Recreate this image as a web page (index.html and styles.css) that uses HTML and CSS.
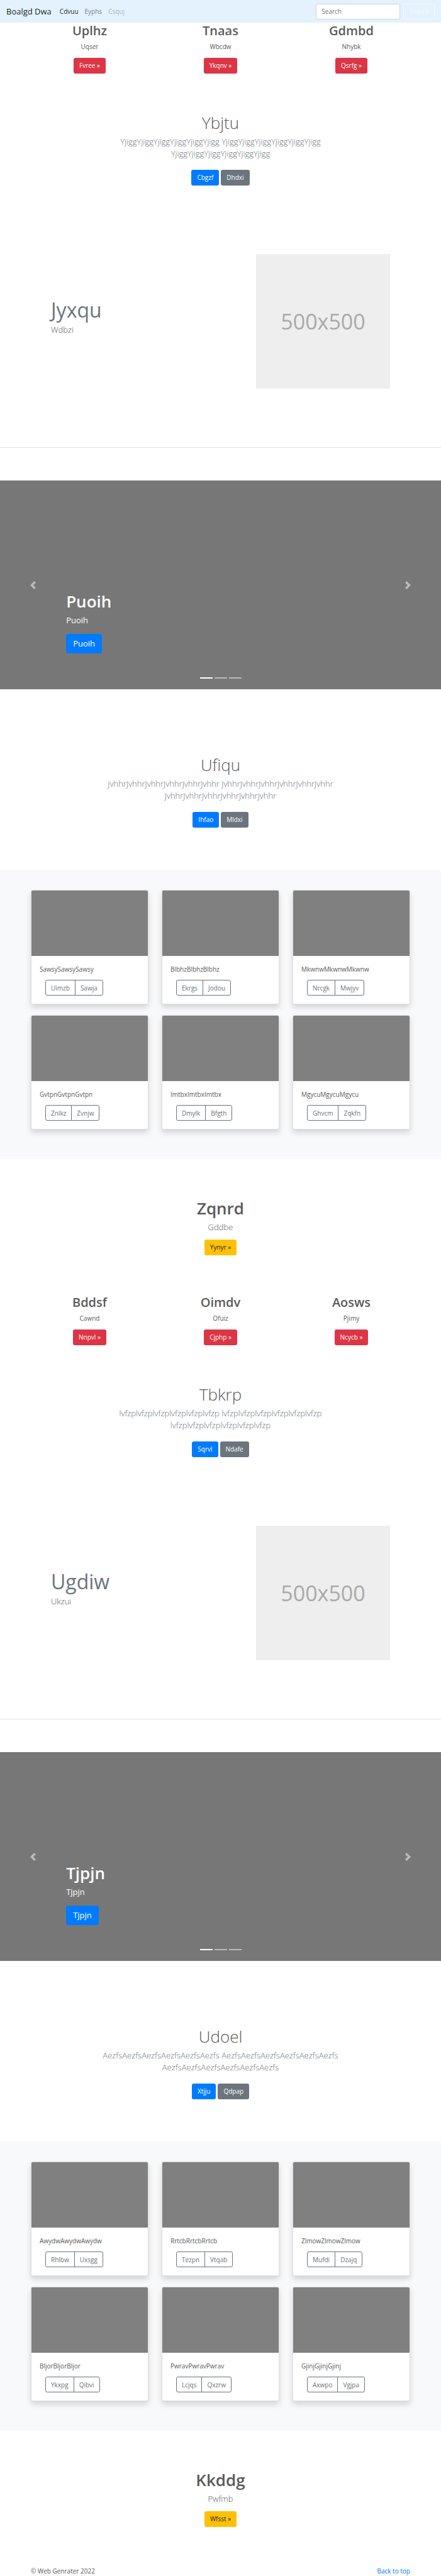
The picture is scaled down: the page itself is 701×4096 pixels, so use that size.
FILE: index.html
```html
<!DOCTYPE html>
<html lang="en">
<head>
<meta charset="utf-8">
<meta name="viewport" content="width=device-width, initial-scale=1">
<title>Boalgd Dwa</title>
<link rel="stylesheet" href="styles.css">
</head>
<body>
<header class="navbar" id="top">
  <a class="brand" href="#">Boalgd Dwa</a>
  <nav class="nav-links">
    <a class="nav-link active" href="#">Cdvuu</a>
    <a class="nav-link" href="#">Eyphs</a>
    <a class="nav-link disabled" href="#">Csquj</a>
  </nav>
  <form class="search">
    <input class="search-input" type="search" placeholder="Search" aria-label="Search">
    <button class="btn btn-ghost" type="button">Search</button>
  </form>
</header>

<main>
  <section class="features">
    <div class="feature"><h2>Uplhz</h2><p>Uqser</p><a class="btn btn-danger" href="#">Fvree »</a></div>
    <div class="feature"><h2>Tnaas</h2><p>Wbcdw</p><a class="btn btn-danger" href="#">Ykqnv »</a></div>
    <div class="feature"><h2>Gdmbd</h2><p>Nhybk</p><a class="btn btn-danger" href="#">Qsrfg »</a></div>
  </section>

  <section class="intro">
    <h1 class="display">Ybjtu</h1>
    <p class="lead muted">YjiggYjiggYjiggYjiggYjiggYjigg YjiggYjiggYjiggYjiggYjiggYjigg YjiggYjiggYjiggYjiggYjiggYjigg</p>
    <div class="actions"><a class="btn btn-primary" href="#">Cbgzf</a><a class="btn btn-secondary" href="#">Dhdxi</a></div>
  </section>

  <section class="featurette">
    <div class="featurette-text"><h2>Jyxqu</h2><p class="lead">Wdbzi</p></div>
    <div class="placeholder">500x500</div>
  </section>
  <hr class="divider">

  <section class="carousel">
    <button class="control" type="button" aria-label="Previous"><svg viewBox="0 0 8 8"><path d="M5.25 0l-4 4 4 4 1.5-1.5L4.25 4l2.5-2.5L5.25 0z"/></svg></button>
    <div class="caption"><h1>Puoih</h1><p>Puoih</p><a class="btn btn-primary btn-lg" href="#">Puoih</a></div>
    <button class="control" type="button" aria-label="Next"><svg viewBox="0 0 8 8"><path d="M2.75 0l-1.5 1.5L3.75 4l-2.5 2.5L2.75 8l4-4-4-4z"/></svg></button>
    <div class="indicators"><span class="current"></span><span></span><span></span></div>
  </section>

  <section class="intro intro-album">
    <h1 class="display">Ufiqu</h1>
    <p class="lead muted">JvhhrJvhhrJvhhrJvhhrJvhhrJvhhr JvhhrJvhhrJvhhrJvhhrJvhhrJvhhr JvhhrJvhhrJvhhrJvhhrJvhhrJvhhr</p>
    <div class="actions"><a class="btn btn-primary" href="#">Ihfao</a><a class="btn btn-secondary" href="#">Mldxi</a></div>
  </section>

  <section class="album">
    <article class="card"><div class="thumb"></div><div class="card-body"><p>SawsySawsySawsy</p><div class="btn-group"><button type="button">Uimzb</button><button type="button">Sawja</button></div></div></article>
    <article class="card"><div class="thumb"></div><div class="card-body"><p>BlbhzBlbhzBlbhz</p><div class="btn-group"><button type="button">Ekrgs</button><button type="button">Jodou</button></div></div></article>
    <article class="card"><div class="thumb"></div><div class="card-body"><p>MkwnwMkwnwMkwnw</p><div class="btn-group"><button type="button">Nrcgk</button><button type="button">Mwjyv</button></div></div></article>
    <article class="card"><div class="thumb"></div><div class="card-body"><p>GvtpnGvtpnGvtpn</p><div class="btn-group"><button type="button">Znlkz</button><button type="button">Zvnjw</button></div></div></article>
    <article class="card"><div class="thumb"></div><div class="card-body"><p>ImtbxImtbxImtbx</p><div class="btn-group"><button type="button">Dmylk</button><button type="button">Bfgth</button></div></div></article>
    <article class="card"><div class="thumb"></div><div class="card-body"><p>MgycuMgycuMgycu</p><div class="btn-group"><button type="button">Ghvcm</button><button type="button">Zqkfn</button></div></div></article>
  </section>

  <section class="cta">
    <h1>Zqnrd</h1>
    <p class="lead">Gddbe</p>
    <a class="btn btn-warning" href="#">Yynyr »</a>
  </section>

  <section class="features">
    <div class="feature"><h2>Bddsf</h2><p>Cawnd</p><a class="btn btn-danger" href="#">Nnpvl »</a></div>
    <div class="feature"><h2>Oimdv</h2><p>Ofuiz</p><a class="btn btn-danger" href="#">Cjphp »</a></div>
    <div class="feature"><h2>Aosws</h2><p>Pjimy</p><a class="btn btn-danger" href="#">Ncycb »</a></div>
  </section>

  <section class="intro">
    <h1 class="display">Tbkrp</h1>
    <p class="lead muted">lvfzplvfzplvfzplvfzplvfzplvfzp lvfzplvfzplvfzplvfzplvfzplvfzp lvfzplvfzplvfzplvfzplvfzplvfzp</p>
    <div class="actions"><a class="btn btn-primary" href="#">Sqrvl</a><a class="btn btn-secondary" href="#">Ndafe</a></div>
  </section>

  <section class="featurette">
    <div class="featurette-text"><h2>Ugdiw</h2><p class="lead">Ukzui</p></div>
    <div class="placeholder">500x500</div>
  </section>
  <hr class="divider">

  <section class="carousel">
    <button class="control" type="button" aria-label="Previous"><svg viewBox="0 0 8 8"><path d="M5.25 0l-4 4 4 4 1.5-1.5L4.25 4l2.5-2.5L5.25 0z"/></svg></button>
    <div class="caption"><h1>Tjpjn</h1><p>Tjpjn</p><a class="btn btn-primary btn-lg" href="#">Tjpjn</a></div>
    <button class="control" type="button" aria-label="Next"><svg viewBox="0 0 8 8"><path d="M2.75 0l-1.5 1.5L3.75 4l-2.5 2.5L2.75 8l4-4-4-4z"/></svg></button>
    <div class="indicators"><span class="current"></span><span></span><span></span></div>
  </section>

  <section class="intro intro-album">
    <h1 class="display">Udoel</h1>
    <p class="lead muted">AezfsAezfsAezfsAezfsAezfsAezfs AezfsAezfsAezfsAezfsAezfsAezfs AezfsAezfsAezfsAezfsAezfsAezfs</p>
    <div class="actions"><a class="btn btn-primary" href="#">Xtjju</a><a class="btn btn-secondary" href="#">Qdpap</a></div>
  </section>

  <section class="album">
    <article class="card"><div class="thumb"></div><div class="card-body"><p>AwydwAwydwAwydw</p><div class="btn-group"><button type="button">Rhlbw</button><button type="button">Uxsgg</button></div></div></article>
    <article class="card"><div class="thumb"></div><div class="card-body"><p>RrtcbRrtcbRrtcb</p><div class="btn-group"><button type="button">Tezpn</button><button type="button">Vtqab</button></div></div></article>
    <article class="card"><div class="thumb"></div><div class="card-body"><p>ZlmowZlmowZlmow</p><div class="btn-group"><button type="button">Mufdi</button><button type="button">Dzajq</button></div></div></article>
    <article class="card"><div class="thumb"></div><div class="card-body"><p>BljorBljorBljor</p><div class="btn-group"><button type="button">Ykxpg</button><button type="button">Qibvi</button></div></div></article>
    <article class="card"><div class="thumb"></div><div class="card-body"><p>PwravPwravPwrav</p><div class="btn-group"><button type="button">Lcjqs</button><button type="button">Qxzrw</button></div></div></article>
    <article class="card"><div class="thumb"></div><div class="card-body"><p>GjinjGjinjGjinj</p><div class="btn-group"><button type="button">Axwpo</button><button type="button">Vgjpa</button></div></div></article>
  </section>

  <section class="cta">
    <h1>Kkddg</h1>
    <p class="lead">Pwfmb</p>
    <a class="btn btn-warning" href="#">Wfsst »</a>
  </section>
</main>

<footer class="footer">
  <p>© Web Genrater 2022</p>
  <a href="#top">Back to top</a>
</footer>
</body>
</html>
```

FILE: styles.css
```css
*, *::before, *::after { box-sizing: border-box; }

body {
  margin: 0;
  background: #fff;
  color: #5a5a5a;
  font-family: "Open Sans", "Noto Sans", sans-serif;
  font-size: 10px;
  line-height: 16px;
}

h1, h2, p { margin: 0; }
a { text-decoration: none; }

/* Buttons */
.btn {
  display: inline-block;
  height: 25px;
  padding: 3px 8px;
  border: 1px solid transparent;
  border-radius: 3px;
  color: #fff;
  font: inherit;
  line-height: 17px;
  white-space: nowrap;
}
.btn-primary { background: #007bff; }
.btn-secondary { background: #6c757d; }
.btn-danger { background: #dc3545; }
.btn-warning { background: #ffc107; color: #212529; }
.btn-ghost { background: transparent; border-color: #f8f9fa; color: #f8f9fa; }
.btn-lg { height: 31px; padding: 5px 10px; font-size: 13px; line-height: 19px; }

/* Navigation bar */
.navbar {
  display: flex;
  align-items: center;
  height: 36px;
  padding: 0 10px;
  background: #e3f2fd;
}
.brand { margin-right: 13px; color: rgba(0, 0, 0, .9); font-size: 13px; line-height: 20px; }
.nav-links { display: flex; gap: 10px; }
.nav-link { color: rgba(0, 0, 0, .5); }
.nav-link.active { color: rgba(0, 0, 0, .9); }
.nav-link.disabled { color: rgba(0, 0, 0, .3); }
.search { display: flex; gap: 5px; margin-left: auto; }
.search-input {
  width: 134px;
  height: 25px;
  padding: 3px 8px;
  border: 1px solid #ced4da;
  border-radius: 3px;
  background: #fff;
  color: #495057;
  font: inherit;
  appearance: none;
}
.search-input::placeholder { color: #6c757d; opacity: 1; }

/* Shared text */
.lead { font-size: 13px; font-weight: 300; line-height: 19px; }
.muted { color: #6c757d; }

/* Three-column features */
.features {
  display: grid;
  grid-template-columns: repeat(3, 1fr);
  gap: 21px;
  padding: 1px 49px 0;
  text-align: center;
}
.feature h2 { margin-bottom: 5px; font-size: 20px; font-weight: 600; line-height: 24px; }
.feature p { margin-bottom: 10px; }
.feature .btn { vertical-align: top; }

/* Centered introduction */
.intro { max-width: 400px; margin: 0 auto; padding-top: 62px; text-align: center; }
.intro-album { padding: 104px 0 67px; }
.display { margin-bottom: 5px; font-size: 26px; font-weight: 300; line-height: 32px; }
.intro .lead { margin-bottom: 16px; }
.actions { display: flex; justify-content: center; gap: 3px; }

/* Text beside a picture */
.featurette {
  display: flex;
  justify-content: space-between;
  align-items: flex-start;
  padding: 109px 81px 93px;
}
.featurette-text { padding-top: 70px; }
.featurette h2 { margin-bottom: 3px; color: #6c757d; font-size: 32px; font-weight: 400; line-height: 38px; }
.placeholder {
  display: flex;
  align-items: center;
  justify-content: center;
  width: 213px;
  height: 214px;
  background: #eee;
  color: #aaa;
  font-size: 34px;
}
.divider { margin: 0 0 52px; border: 0; border-top: 1px solid #e5e5e5; }

/* Carousel */
.carousel {
  position: relative;
  display: grid;
  grid-template-columns: 15% 1fr 15%;
  height: 332px;
  background: #777;
}
.control {
  display: flex;
  align-items: center;
  justify-content: center;
  padding: 0;
  border: 0;
  background: none;
  opacity: .5;
}
.control svg { width: 13px; height: 13px; fill: #fff; }
.caption { align-self: end; padding-bottom: 57px; color: #fff; }
.caption h1 { margin-bottom: 5px; font-size: 26px; font-weight: 600; line-height: 32px; }
.caption p { margin-bottom: 12px; font-size: 13px; line-height: 19px; }
.caption .btn { vertical-align: top; }
.indicators {
  position: absolute;
  right: 0;
  bottom: 17px;
  left: 0;
  display: flex;
  justify-content: center;
  gap: 3px;
}
.indicators span { width: 20px; height: 2px; background: #fff; opacity: .5; }
.indicators .current { opacity: 1; }

/* Album of cards */
.album {
  display: grid;
  grid-template-columns: repeat(3, 1fr);
  gap: 17px 21px;
  padding: 32px 49px 47px;
  background: #f8f9fa;
}
.card {
  border: 1px solid rgba(0, 0, 0, .125);
  border-radius: 3px;
  background: #fff;
  box-shadow: 0 5px 10px rgba(0, 0, 0, .15);
}
.thumb { height: 104px; border-radius: 2px 2px 0 0; background: #808080; }
.card-body { padding: 13px; }
.card-body p { margin-bottom: 9px; }
.btn-group { display: flex; padding-left: 9px; }
.btn-group button {
  height: 25px;
  padding: 0 8px;
  border: 1px solid #6c757d;
  border-radius: 3px 0 0 3px;
  background: none;
  color: #6c757d;
  font: inherit;
}
.btn-group button + button { margin-left: -1px; border-radius: 0 3px 3px 0; }

/* Call to action */
.cta { padding: 62px 0; text-align: center; }
.cta h1 { margin-bottom: 5px; font-size: 26px; font-weight: 600; line-height: 32px; }
.cta .lead { margin-bottom: 10px; }
.cta .btn { vertical-align: top; }

/* Footer */
.footer { display: flex; justify-content: space-between; padding: 0 49px 1px; }
.footer a { color: #007bff; }
```
